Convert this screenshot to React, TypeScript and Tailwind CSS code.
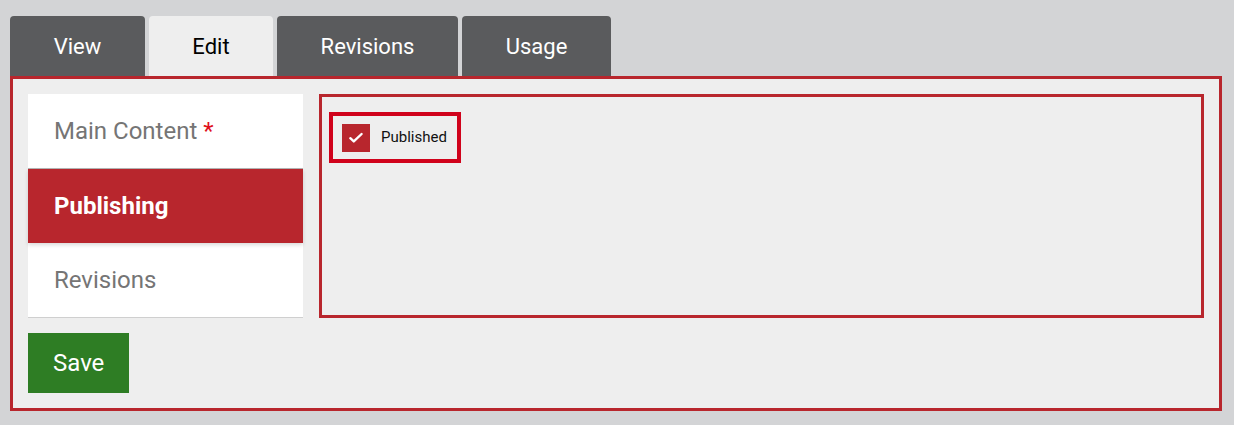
import React from "react";

const tabs = [
  { label: "View", w: "w-[135px]", active: false },
  { label: "Edit", w: "w-[124px]", active: true },
  { label: "Revisions", w: "w-[181px]", active: false },
  { label: "Usage", w: "w-[149px]", active: false },
];

export default function App() {
  return (
    <div className="w-[1234px] h-[425px] bg-[#d3d4d6] pt-[16px] px-[10px] font-['Roboto',sans-serif]">
      <div className="flex gap-[4px] h-[60px]">
        {tabs.map((t) => (
          <div
            key={t.label}
            className={`${t.w} h-[60px] rounded-t-[4px] flex items-center justify-center text-[22px] ${
              t.active ? "bg-[#eeeeee] text-black" : "bg-[#5a5b5d] text-white"
            }`}
          >
            {t.label}
          </div>
        ))}
      </div>
      <div className="w-[1212px] h-[335px] border-[3px] border-[#b8262d] bg-[#eeeeee] p-[15px]">
        <div className="flex gap-[16px]">
          <div className="w-[275px] flex flex-col">
            <div className="h-[75px] bg-white border-b border-[#b5b5b5] flex items-center pl-[26px] text-[24px] text-[#757575]">
              Main Content<span className="text-[#e0101b] ml-[6px]">*</span>
            </div>
            <div className="h-[74px] bg-[#b8262d] flex items-center pl-[26px] text-[24px] font-bold text-white shadow-[0_2px_4px_rgba(0,0,0,0.15)] relative z-10">
              Publishing
            </div>
            <div className="h-[75px] bg-white border-b border-[#cfcfcf] flex items-center pl-[26px] text-[24px] text-[#757575]">
              Revisions
            </div>
          </div>
          <div className="flex-1 h-[224px] border-[3px] border-[#b8262d] pt-[15px] pl-[7px]">
            <div className="inline-flex items-center h-[51px] border-[4px] border-[#d0021b] pl-[9px] pr-[10px]">
              <div className="w-[28px] h-[28px] bg-[#b8262d] flex items-center justify-center">
                <svg width="16" height="16" viewBox="0 0 16 16">
                  <path d="M2.3 8.2 L5.8 11.4 L13.6 4" stroke="white" strokeWidth="2.4" fill="none" strokeLinecap="round" strokeLinejoin="round" />
                </svg>
              </div>
              <span className="ml-[11px] text-[15px] text-[#111]">Published</span>
            </div>
          </div>
        </div>
        <button className="mt-[15px] w-[101px] h-[60px] bg-[#2e7d24] text-white text-[24px] flex items-center pl-[25px]">
          Save
        </button>
      </div>
    </div>
  );
}
